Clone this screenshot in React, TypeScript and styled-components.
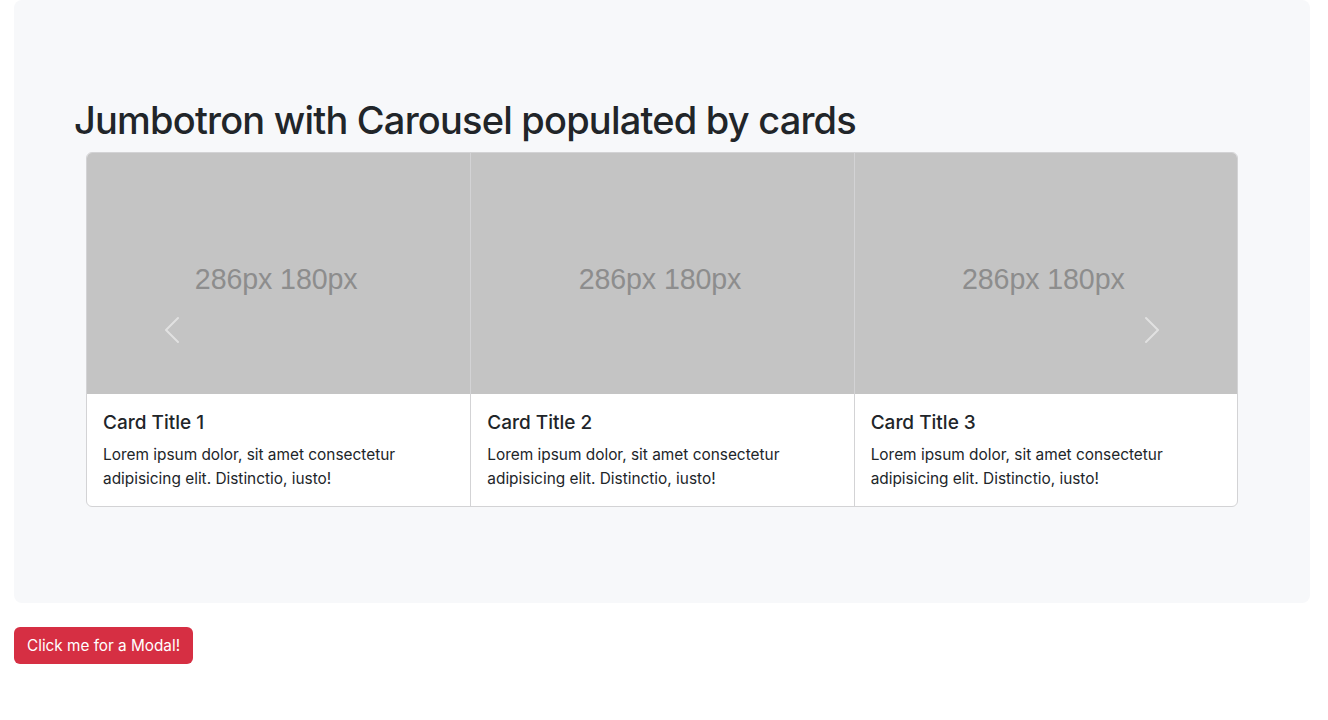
import React from 'react'
import styled, { createGlobalStyle } from 'styled-components'

const GlobalStyle = createGlobalStyle`
	* {
		box-sizing: border-box;
	}

	body {
		margin: 0;
		font-family: Inter, 'Noto Sans', sans-serif;
		color: #212529;
		background: #fff;
	}
`

const Page = styled.div`
	padding: 0 18px 0 14px;
`

const Jumbotron = styled.section`
	background: #f7f8fa;
	border-radius: 8px;
	padding: 96px 60px 96px;
`

const Heading = styled.h1`
	margin: 0 0 8px;
	font-size: 38px;
	font-weight: 500;
	line-height: 48px;
	letter-spacing: -0.8px;
`

const Carousel = styled.div`
	position: relative;
	margin: 0 12px;
`

const CardGroup = styled.div`
	display: grid;
	grid-template-columns: repeat(3, 1fr);
	border: 1px solid #d3d3d5;
	border-radius: 6px;
	overflow: hidden;
	background: #fff;
`

const Card = styled.div<{ $first?: boolean }>`
	display: flex;
	flex-direction: column;
	border-left: ${(p) => (p.$first ? 'none' : '1px solid #d3d3d5')};
`

const Placeholder = styled.div`
	height: 241px;
	background: #c4c4c4;
	display: flex;
	align-items: center;
	justify-content: center;
	padding: 12px 5px 0 0;
	font-family: 'Liberation Sans', Arial, sans-serif;
	font-size: 28.6px;
	letter-spacing: -0.1px;
	color: #8d8d8d;
`

const CardBody = styled.div`
	padding: 17px 16px 15px;
`

const CardTitle = styled.h5`
	margin: 0 0 8px;
	font-size: 19px;
	font-weight: 500;
	line-height: 24px;
`

const CardText = styled.p`
	margin: 0;
	font-size: 15.4px;
	line-height: 24px;
`

const Control = styled.button<{ $side: 'left' | 'right' }>`
	position: absolute;
	top: 0;
	bottom: 0;
	${(p) => p.$side}: 0;
	width: 15%;
	display: flex;
	align-items: center;
	justify-content: center;
	background: none;
	border: 0;
	padding: 0;
	opacity: 0.5;
	cursor: pointer;
`

const ModalButton = styled.button`
	margin-top: 24px;
	background: #d62f43;
	color: #fff;
	border: 0;
	border-radius: 6px;
	padding: 7px 13px;
	font-family: Inter, sans-serif;
	font-size: 15.3px;
	line-height: 23px;
	cursor: pointer;
`

function Chevron({ dir }: { dir: 'prev' | 'next' }) {
	return (
		<svg width="32" height="32" viewBox="0 0 16 16" fill="#fff">
			{dir === 'prev' ? (
				<path d="M11.354 1.646a.5.5 0 0 1 0 .708L5.707 8l5.647 5.646a.5.5 0 0 1-.708.708l-6-6a.5.5 0 0 1 0-.708l6-6a.5.5 0 0 1 .708 0z" />
			) : (
				<path d="M4.646 1.646a.5.5 0 0 1 .708 0l6 6a.5.5 0 0 1 0 .708l-6 6a.5.5 0 0 1-.708-.708L10.293 8 4.646 2.354a.5.5 0 0 1 0-.708z" />
			)}
		</svg>
	)
}

export default function App(): React.ReactNode {
	const cards = [1, 2, 3].map((n) => ({
		title: `Card Title ${n}`,
		text: 'Lorem ipsum dolor, sit amet consectetur adipisicing elit. Distinctio, iusto!',
	}))

	return (
		<Page>
			<GlobalStyle />
			<Jumbotron>
				<Heading>Jumbotron with Carousel populated by cards</Heading>
				<Carousel>
					<CardGroup>
						{cards.map((card, index) => (
							<Card key={index} $first={index === 0}>
								<Placeholder>286px 180px</Placeholder>
								<CardBody>
									<CardTitle>{card.title}</CardTitle>
									<CardText>{card.text}</CardText>
								</CardBody>
							</Card>
						))}
					</CardGroup>
					<Control $side="left" aria-label="Previous">
						<Chevron dir="prev" />
					</Control>
					<Control $side="right" aria-label="Next">
						<Chevron dir="next" />
					</Control>
				</Carousel>
			</Jumbotron>
			<ModalButton>Click me for a Modal!</ModalButton>
		</Page>
	)
}
